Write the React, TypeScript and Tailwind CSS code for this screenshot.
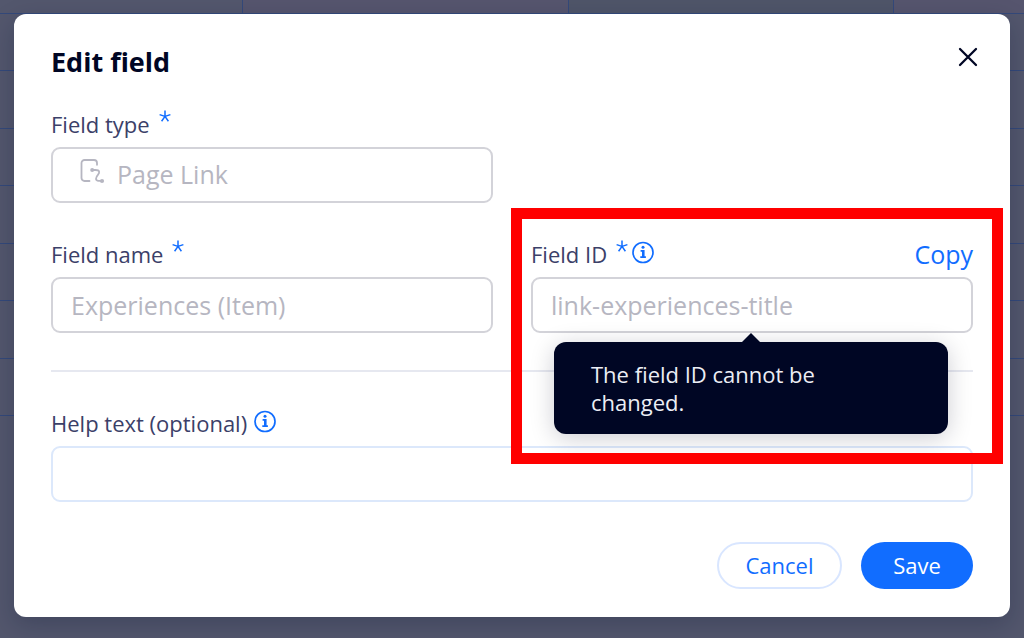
import type { ReactNode } from 'react';

const ROWS = [0, 1, 2, 3, 4, 5, 6];

function Required() {
  return (
    <svg width="12" height="12" viewBox="0 0 12 12" fill="none" stroke="#116dff" strokeWidth="1.5" className="mb-4 ml-[9px] shrink-0" aria-hidden="true">
      <path d="M6 6.4V.6M6 6.4.6 4.6M6 6.4l5.4-1.8M6 6.4l-3.4 4.8M6 6.4l3.4 4.8" />
    </svg>
  );
}

function InfoButton({ label }: { label: string }) {
  return (
    <button type="button" aria-label={label} className="mb-1 shrink-0 text-[#116dff]">
      <svg width="24" height="24" viewBox="0 0 24 24" fill="none" stroke="currentColor" className="block">
        <circle cx="12" cy="12.5" r="10" strokeWidth="1.7" />
        <path d="M9.6 10.8h2.8v6M9.3 17.1h5.6" strokeWidth="1.8" />
        <path d="M12.2 10v7" strokeWidth="2.4" />
        <circle cx="12" cy="7.3" r="1.5" fill="currentColor" stroke="none" />
      </svg>
    </button>
  );
}

function PageLinkIcon() {
  return (
    <svg width="26" height="26" viewBox="0 0 26 26" fill="none" stroke="#b6b6c1" strokeWidth="1.8" strokeLinecap="round" className="mb-2 shrink-0" aria-hidden="true">
      <path d="M10.5 23H5.5a3 3 0 0 1-3-3V5a3 3 0 0 1 3-3h9.5a3 3 0 0 1 3 3v1.8" />
      <path d="M13.5 12h3c4.4 0 4.4 2.6 2.4 4.8-2.2 2.4-3 6 .6 6H23" />
      <circle cx="13.2" cy="12" r="2" fill="#b6b6c1" stroke="none" />
      <circle cx="23" cy="23" r="2.1" fill="#b6b6c1" stroke="none" />
    </svg>
  );
}

function Backdrop() {
  return (
    <div className="col-start-1 row-start-1 overflow-hidden" aria-hidden="true">
      <div className="grid h-[14px] grid-cols-[243px_326px_325px_1fr] border-b border-[#34497a]">
        <div className="border-r border-[#34497a]" />
        <div className="border-r border-[#34497a] bg-[#56556e]" />
        <div className="border-r border-[#34497a] bg-[#4f5569]" />
        <div className="bg-[#56556e]" />
      </div>
      {ROWS.map((row) => (
        <div key={row} className="border-b border-[#34497a] odd:h-[58px] even:h-[57px]" />
      ))}
    </div>
  );
}

function Label({ htmlFor, children }: { htmlFor: string; children: ReactNode }) {
  return (
    <label htmlFor={htmlFor} className="text-[22px] leading-[26px] text-[#3b4068]">
      {children}
    </label>
  );
}

const inputClass =
  'h-14 w-full rounded-[9px] border-2 border-[#d3d3d9] bg-white px-[18px] text-[25px] text-[#b6b6c1] outline-none';

export default function App() {
  return (
    <div className="grid min-h-screen bg-[#53576d] font-['Open_Sans',sans-serif]">
      <Backdrop />

      <form
        role="dialog"
        aria-labelledby="dialog-title"
        className="z-10 col-start-1 row-start-1 mx-[14px] mt-[14px] self-start rounded-xl bg-white px-[37px] pt-8 pb-7 shadow-[0_8px_24px_rgba(10,20,50,0.25)]"
        onSubmit={(e) => e.preventDefault()}
      >
        <header className="mb-8 flex h-8 items-center justify-between">
          <h2 id="dialog-title" className="text-[27px] leading-8 font-bold text-[#000624]">
            Edit field
          </h2>
          <button type="button" aria-label="Close" className="-mr-[7px] mb-[10px] flex size-6 items-center justify-center">
            <svg width="20" height="20" viewBox="0 0 20 20" fill="none" stroke="#000624" strokeWidth="2.3" strokeLinecap="round">
              <path d="m2 2 16 16M18 2 2 18" />
            </svg>
          </button>
        </header>

        <div className="grid grid-cols-2 gap-x-[38px] gap-y-[37px]">
          <div>
            <div className="mb-[9px] flex h-7 items-center">
              <Label htmlFor="field-type">Field type</Label>
              <Required />
            </div>
            <div className="flex h-14 items-center gap-3 rounded-[9px] border-2 border-[#d3d3d9] px-[26px]">
              <PageLinkIcon />
              <input id="field-type" readOnly value="Page Link" className="min-w-0 flex-1 text-[25px] text-[#b6b6c1] outline-none" />
            </div>
          </div>

          <div className="col-start-1">
            <div className="mb-[9px] flex h-7 items-center">
              <Label htmlFor="field-name">Field name</Label>
              <Required />
            </div>
            <input id="field-name" readOnly value="Experiences (Item)" className={inputClass} />
          </div>

          <div className="relative">
            <div className="mb-[9px] flex h-7 items-center">
              <Label htmlFor="field-id">Field ID</Label>
              <Required />
              <span className="ml-[3px] flex">
                <InfoButton label="About the field ID" />
              </span>
              <button type="button" className="ml-auto text-[25px] leading-7 text-[#116dff]">
                Copy
              </button>
            </div>
            <input id="field-id" readOnly value="link-experiences-title" aria-describedby="field-id-tip" className={inputClass} />

            <div
              id="field-id-tip"
              role="tooltip"
              className="absolute right-[25px] left-[23px] top-full z-10 mt-[9px] rounded-xl bg-[#000624] px-[37px] pt-[18px] pb-[18px] text-[22px] leading-7 text-[#eceef5] shadow-[0_4px_24px_rgba(0,6,36,0.2)]"
            >
              <svg width="18" height="9" viewBox="0 0 18 9" className="absolute bottom-full left-1/2 -translate-x-1/2" aria-hidden="true">
                <path d="m0 9 9-9 9 9z" fill="#000624" />
              </svg>
              <p className="max-w-[260px]">The field ID cannot be changed.</p>
            </div>

            <div className="pointer-events-none absolute -top-8 -right-[30px] -bottom-[131px] -left-5 z-20 border-[11px] border-[#ff0000]" />
          </div>
        </div>

        <hr className="my-[37px] border-t-2 border-[#e6e8f0]" />

        <div className="mb-[9px] flex h-7 items-center gap-1.5">
          <Label htmlFor="help-text">Help text (optional)</Label>
          <InfoButton label="About help text" />
        </div>
        <input
          id="help-text"
          className="block h-14 w-full rounded-[9px] border-2 border-[#dce8fb] bg-white px-[18px] text-[25px] text-[#000624] outline-none"
        />

        <footer className="mt-10 flex justify-end gap-[19px]">
          <button type="button" className="h-[47px] w-[125px] rounded-full border-2 border-[#d9e6ff] text-[22px] font-medium text-[#116dff]">
            Cancel
          </button>
          <button type="submit" className="h-[47px] w-28 rounded-full bg-[#116dff] text-[22px] font-medium text-white">
            Save
          </button>
        </footer>
      </form>
    </div>
  );
}
